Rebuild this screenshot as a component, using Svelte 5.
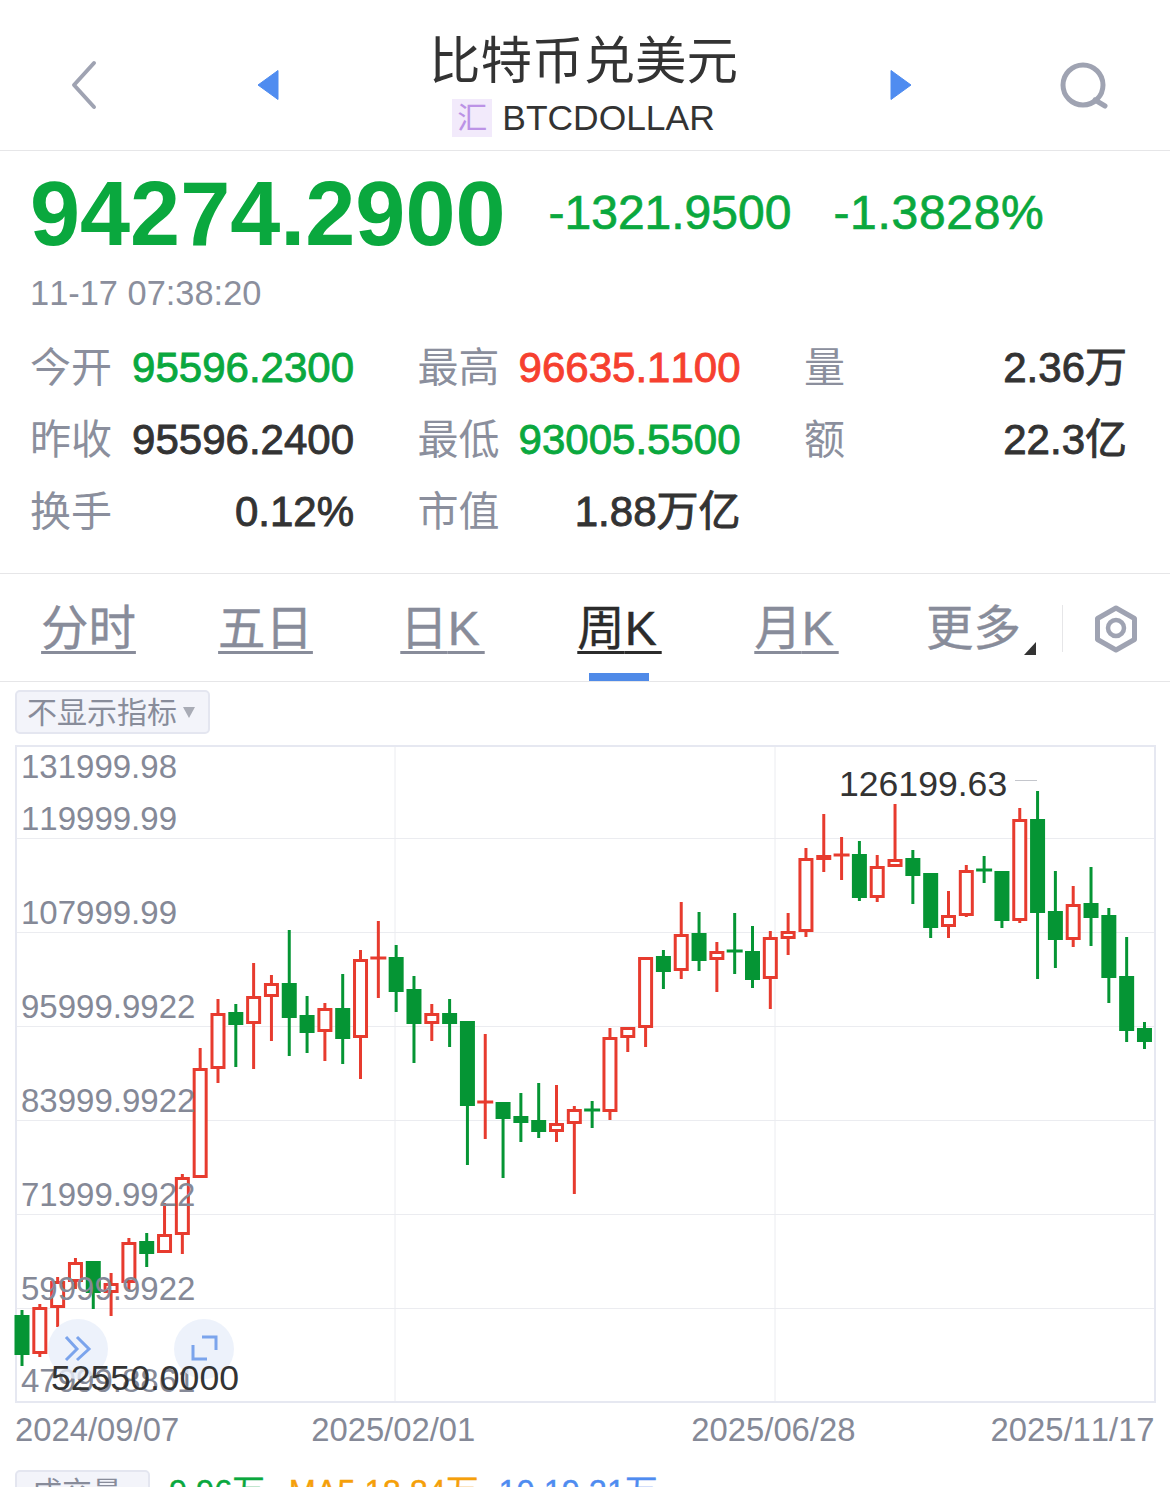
<script>
  const raw = [
    ['g',1310,1366,1315,1355],['r',1304,1357,1307,1354],['r',1277,1327,1281,1308],['r',1258,1289,1262,1282],
    ['g',1261,1309,1261,1293],['r',1273,1316,1283,1293],['r',1238,1290,1242,1283],['g',1233,1267,1241,1254],
    ['r',1203,1253,1234,1253],['r',1174,1254,1177,1235],['r',1048,1178,1068,1178],['r',999,1083,1013,1069],
    ['g',1004,1067,1012,1025],['r',963,1069,996,1024],['r',975,1041,983,997],['g',930,1056,983,1018],
    ['g',996,1053,1015,1033],['r',1003,1061,1008,1032],['g',974,1064,1008,1039],['r',950,1079,959,1038],
    ['r',921,998,958,958],['g',945,1012,957,992],['g',976,1063,989,1024],['r',1004,1041,1013,1024],
    ['g',999,1047,1013,1024],['g',1021,1165,1021,1106],['r',1034,1139,1102,1102],['g',1102,1178,1102,1119],
    ['g',1093,1142,1116,1123],['g',1083,1138,1120,1132],['r',1085,1142,1123,1132],['r',1106,1194,1109,1124],
    ['g',1101,1128,1110,1110],['r',1028,1120,1037,1112],['r',1028,1052,1027,1038],['r',957,1047,957,1028],
    ['g',950,989,956,972],['r',902,979,934,971],['g',912,971,933,961],['r',942,992,951,960],
    ['g',913,974,951,951],['g',926,988,951,980],['r',931,1009,937,979],['r',913,955,931,939],
    ['r',848,937,858,932],['r',814,872,855,860],['r',837,880,855,855],['g',841,901,854,898],
    ['r',855,902,866,898],['r',804,867,859,867],['g',850,904,858,876],['g',873,938,873,928],
    ['r',891,938,915,927],['r',865,917,870,916],['g',856,883,870,870],['g',871,928,871,921],
    ['r',808,923,819,921],['g',791,979,819,913],['g',871,968,911,940],['r',886,947,904,940],
    ['g',867,946,903,918],['g',908,1003,915,978],['g',937,1042,976,1031],['g',1022,1049,1028,1042]
  ];
  const candles = raw.map((c, i) => ({ up: c[0] === 'r', x: 22 + i * 17.817, wt: c[1], wb: c[2], bt: c[3], bb: c[4] }));
  const gridY = [838.5, 932.5, 1026.5, 1120.5, 1214.5, 1308.5];
  const gridX = [395, 775];
  const axis = [
    ['131999.98', 778], ['119999.99', 830], ['107999.99', 924], ['95999.9922', 1018],
    ['83999.9922', 1112], ['71999.9922', 1206], ['59999.9922', 1300], ['47999.8861', 1392]
  ];
  const stats = [
    { l: '今开', v: '95596.2300', c: 'down' }, { l: '最高', v: '96635.1100', c: 'rise' }, { l: '量', v: '2.36万', c: '' },
    { l: '昨收', v: '95596.2400', c: '' }, { l: '最低', v: '93005.5500', c: 'down' }, { l: '额', v: '22.3亿', c: '' },
    { l: '换手', v: '0.12%', c: '' }, { l: '市值', v: '1.88万亿', c: '' }
  ];
  const tabs = [
    { zh: '分时', k: false }, { zh: '五日', k: false }, { zh: '日', k: true },
    { zh: '周', k: true, active: true }, { zh: '月', k: true }
  ];
</script>

<div class="page">
  <header class="top">
    <div class="slot back">
      <svg width="30" height="50" viewBox="0 0 30 50"><path d="M24 3 4 25l20 22" class="ico chev" /></svg>
    </div>
    <div class="slot prev">
      <svg width="22" height="32" viewBox="0 0 22 32"><path d="M21 1.5v29L1 16z" class="tri" /></svg>
    </div>
    <div class="title">
      <div class="name">比特币兑美元</div>
      <div class="code"><span class="tag">汇</span><span class="sym">BTCDOLLAR</span></div>
    </div>
    <div class="slot next">
      <svg width="22" height="32" viewBox="0 0 22 32"><path d="M1 1.5v29L21 16z" class="tri" /></svg>
    </div>
    <div class="slot search">
      <svg width="50" height="50" viewBox="0 0 50 50"><circle cx="24" cy="25" r="20" class="ico" /><path d="M36 40l10 6" class="ico" /></svg>
    </div>
  </header>

  <section class="quote">
    <div class="prices">
      <span class="price">94274.2900</span>
      <span class="chg">-1321.9500</span>
      <span class="chg pct">-1.3828%</span>
    </div>
    <div class="time">11-17 07:38:20</div>
    <div class="stats">
      {#each stats as s}
        <div class="stat">
          <span class="lab">{s.l}</span>
          <span class="val {s.c}">{s.v}</span>
        </div>
      {/each}
    </div>
  </section>

  <nav class="tabs">
    {#each tabs as t}
      <div class="tab" class:active={t.active}>
        <span class="tx">{t.zh}{#if t.k}<span class="k">K</span>{/if}</span>
      </div>
    {/each}
    <div class="tab more">
      <span class="plain">更多</span>
      <svg class="corner" width="12" height="13" viewBox="0 0 12 13"><path d="M0 13 12 0v13z" /></svg>
    </div>
    <div class="gear">
      <svg width="46" height="52" viewBox="0 0 46 52">
        <path d="M23 5 41.5 15.5v21L23 47 4.5 36.5v-21z" class="hex" />
        <circle cx="23" cy="25" r="8" class="hex thin" />
      </svg>
    </div>
  </nav>

  <div class="pill main"><span>不显示指标</span><i class="caret"></i></div>

  <svg class="chart" width="1170" height="665" viewBox="0 740 1170 665">
    <rect x="16" y="746" width="1139" height="656" class="frame" />
    {#each gridY as y}<line x1="17" x2="1154" y1={y} y2={y} class="grid" />{/each}
    {#each gridX as x}<line x1={x} x2={x} y1="747" y2="1401" class="grid" />{/each}

    {#each candles as c}
      <g class={c.up ? 'up' : 'dn'}>
        {#if c.bt === c.bb}
          <line x1={c.x} x2={c.x} y1={c.wt} y2={c.wb} class="wick" />
          <line x1={c.x - 8} x2={c.x + 8} y1={c.bt} y2={c.bt} class="wick" />
        {:else}
          <line x1={c.x} x2={c.x} y1={c.wt} y2={c.bt} class="wick" />
          <line x1={c.x} x2={c.x} y1={c.bb} y2={c.wb} class="wick" />
          {#if c.up}
            <rect x={c.x - 6} y={c.bt + 1.5} width="12" height={c.bb - c.bt - 3} class="hollow" />
          {:else}
            <rect x={c.x - 7.5} y={c.bt} width="15" height={c.bb - c.bt} class="solid" />
          {/if}
        {/if}
      </g>
    {/each}

    {#each axis as a}<text x="21" y={a[1]} class="ax">{a[0]}</text>{/each}

    <circle cx="78" cy="1349" r="30" class="fab" />
    <circle cx="204" cy="1349" r="30" class="fab" />
    <path d="M66 1337l11 12-11 11M77 1337l12 12-12 11" class="fabi" />
    <path d="M202 1337h14v13M193 1345v14h14" class="fabi" />

    <line x1="1015" x2="1037" y1="780.5" y2="780.5" class="mark" />
    <text x="839" y="796" class="ext">126199.63</text>
    <text x="51" y="1390" class="ext">52550.0000</text>
  </svg>

  <div class="dates">
    <span>2024/09/07</span>
    <span class="d2">2025/02/01</span>
    <span class="d3">2025/06/28</span>
    <span class="d4">2025/11/17</span>
  </div>

  <div class="vol">
    <div class="pill small"><span>成交量</span><i class="caret"></i></div>
    <span class="v green">9.96万</span>
    <span class="v orange">MA5 18.84万</span>
    <span class="v blue">10 19.21万</span>
  </div>
</div>

<style>
  :global(body) { margin: 0; background: #fff; }
  .page {
    width: 1170px; height: 1487px; overflow: hidden; background: #fff; font-kerning: none;
    font-family: "Liberation Sans", "Noto Sans CJK SC", sans-serif; color: #333;
  }
  .top { display: flex; height: 150px; border-bottom: 1px solid #e6e6e8; box-sizing: content-box; }
  .slot { display: flex; align-items: center; justify-content: center; padding-top: 20px; box-sizing: border-box; }
  .back { width: 170px; }
  .prev { width: 196px; }
  .next { width: 194px; }
  .search { width: 172px; }
  .ico { fill: none; stroke: #9fa3b2; stroke-width: 5; stroke-linecap: round; stroke-linejoin: round; }
  .chev { stroke-width: 4; }
  .tri { fill: #4f8cf0; stroke: #4f8cf0; stroke-width: 1; stroke-linejoin: round; }
  .title { width: 438px; padding-right: 3px; box-sizing: border-box; display: flex; flex-direction: column; align-items: center; }
  .name { font-size: 51.5px; line-height: 60px; margin-top: 31px; color: #333; }
  .code { display: flex; align-items: center; gap: 10px; margin-top: 8px; }
  .tag {
    width: 40px; height: 38px; background: #f2eafb; color: #bc93e6; font-size: 30px;
    line-height: 38px; text-align: center;
  }
  .sym { font-size: 35.4px; line-height: 38px; color: #333; }

  .quote { padding: 13px 0 25px 30px; border-bottom: 1px solid #e6e6e8; }
  .prices { display: flex; align-items: center; height: 100px; }
  .price { font-size: 90px; font-weight: 700; color: #0aa83e; line-height: 100px; }
  .chg { font-size: 48px; color: #0aa83e; margin-left: 43px; margin-top: -4px; -webkit-text-stroke: 0.7px #0aa83e; }
  .pct { margin-left: 42px; letter-spacing: 0.7px; }
  .time { font-size: 34.4px; line-height: 40px; margin-top: 9px; color: #8b8f9d; }
  .stats { display: grid; grid-template-columns: 324px 323px 323px; column-gap: 63.5px; grid-auto-rows: 72px; margin-top: 19px; }
  .stat { display: flex; align-items: baseline; justify-content: space-between; line-height: 72px; }
  .lab { font-size: 41px; color: #8b8f9d; }
  .val { font-size: 42px; color: #333; -webkit-text-stroke: 0.9px currentColor; }
  .val.down { color: #0aa83e; }
  .val.rise { color: #f6402f; }

  .tabs { display: flex; height: 107px; border-bottom: 1px solid #e6e6e8; }
  .tab { width: 177px; position: relative; display: flex; justify-content: center; align-items: center; padding-top: 2px; box-sizing: border-box; font-size: 47.4px; color: #888c9a; -webkit-text-stroke: 0.4px currentColor; }
  .tx { text-decoration: underline; text-decoration-thickness: 3px; text-underline-offset: 6px; line-height: 56px; }
  .k { font-size: 48px; letter-spacing: 5px; }
  .tab.active { color: #2b2b2b; }
  .tab.active::after { content: ""; position: absolute; left: 57.5px; bottom: 0; width: 60px; height: 8px; background: #4f8ae8; }
  .plain { line-height: 56px; }
  .corner { position: absolute; left: 139px; top: 68px; fill: #333; }
  .gear { flex: 1; position: relative; display: flex; align-items: center; justify-content: center; padding-top: 3px; box-sizing: border-box; }
  .gear::before { content: ""; position: absolute; left: 0; top: 31px; height: 47px; width: 1px; background: #e6e6e8; }
  .hex { fill: none; stroke: #9fa3b2; stroke-width: 5; stroke-linejoin: round; }
  .thin { stroke-width: 4.5; }

  .pill { display: flex; align-items: center; box-sizing: border-box; background: #f3f4fa; border: 2px solid #e4e6f0; border-radius: 5px; color: #888c9a; font-size: 30px; padding-bottom: 4px; }
  .main { width: 195px; height: 44px; margin: 8px 0 0 15px; padding-left: 10px; }
  .caret { width: 0; height: 0; border: 6.5px solid transparent; border-top: 11px solid #a9acb6; border-bottom: 0; margin: 4px 0 0 6px; }

  .chart { display: block; margin-top: 6px; }
  .frame { fill: none; stroke: #e6e8f1; stroke-width: 2; }
  .grid { stroke: #ebecf0; stroke-width: 1; }
  .wick { stroke-width: 3; }
  .up .wick { stroke: #e73b2e; }
  .dn .wick { stroke: #059534; }
  .hollow { fill: #fff; stroke: #e73b2e; stroke-width: 3; }
  .solid { fill: #059534; }
  .ax { font-size: 33px; fill: #858997; }
  .fab { fill: rgba(233, 239, 250, 0.8); }
  .fabi { fill: none; stroke: #7ba4ec; stroke-width: 3; }
  .mark { stroke: #c4c6cc; stroke-width: 1; }
  .ext { font-size: 35.6px; fill: #333; }

  .dates { display: flex; height: 40px; margin-top: 5px; padding-left: 15px; font-size: 32.8px; line-height: 40px; color: #858997; }
  .d2 { margin-left: 132px; }
  .d3 { margin-left: 216px; }
  .d4 { margin-left: 135px; }

  .vol { display: flex; margin: 20px 0 0 15px; align-items: flex-start; }
  .small { width: 135px; height: 44px; padding-left: 15px; flex: none; }
  .small span { font-size: 30px; }
  .small .caret { margin-left: 6px; }
  .v { font-size: 32.5px; line-height: 44px; -webkit-text-stroke: 0.4px currentColor; }
  .green { color: #0aa83e; margin-left: 19px; }
  .orange { color: #f5a00a; margin-left: 24px; }
  .blue { color: #4f8cf0; margin-left: 20px; }
</style>
